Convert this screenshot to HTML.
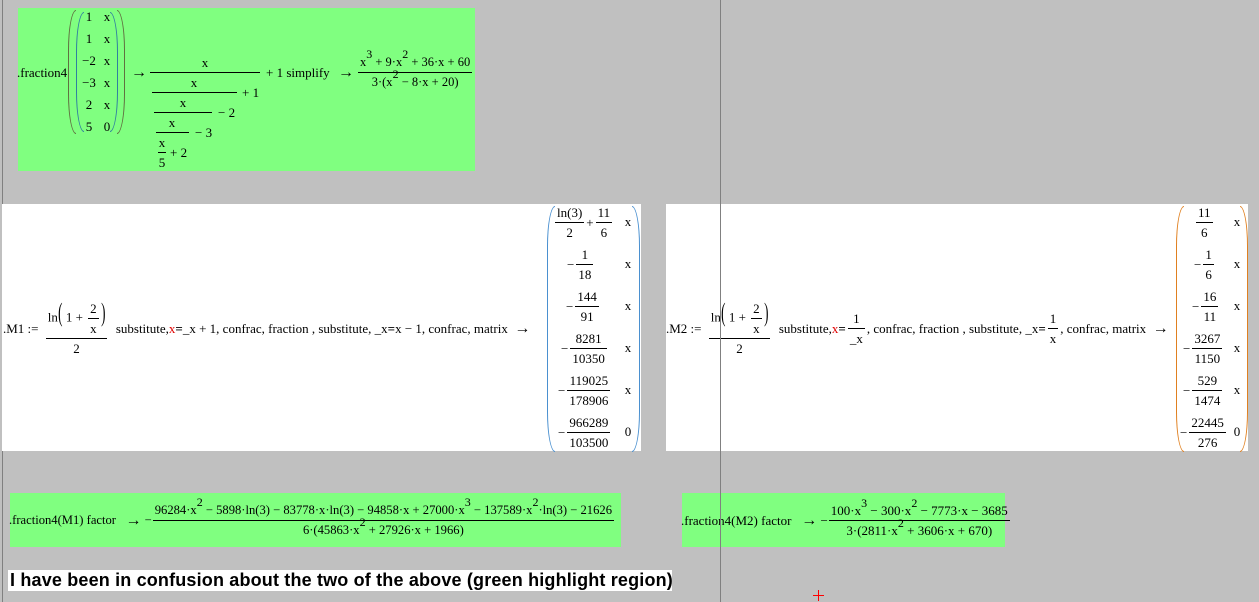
<!DOCTYPE html>
<html><head><meta charset="utf-8"><style>
body{margin:0;width:1259px;height:602px;background:#c0c0c0;position:relative;overflow:hidden;font-family:"Liberation Serif",serif;font-size:13px;color:#000}
.b{position:absolute}
.r{position:absolute;display:flex;align-items:center;height:0;white-space:nowrap;line-height:13px}
.fr{display:inline-flex;flex-direction:column;align-items:center;margin:0 2px}
.fr>span{padding:0 2px;line-height:13px}
.fr>i{display:block;align-self:stretch;border-top:1px solid #000;height:0;margin:3px 0}
sup{font-size:12px;line-height:0;position:relative;top:-2px;vertical-align:super}
.pl{position:absolute;border:1px solid #000;border-right:none;border-radius:8px 0 0 8px/40px 0 0 40px}
.pr{position:absolute;border:1px solid #000;border-left:none;border-radius:0 8px 8px 0/0 40px 40px 0}
.c{position:absolute;width:30px;text-align:center;transform:translate(-15px,-7px);line-height:14px}
.red{color:#e00000}
.ar{font-size:16px}
.bp{font-size:26px;line-height:13px;display:inline-block;transform:scaleX(.5);margin:0 -2px}
</style></head><body>
<div class="b" style="left:2px;top:0;width:1px;height:602px;background:#808080"></div>

<!-- box 1 -->
<div class="b" style="left:18px;top:8px;width:457px;height:163px;background:#80ff80"></div>
<div class="r" style="left:17px;top:72px">.fraction4</div>
<div class="pl" style="left:68px;top:10px;width:7px;height:122px;border-color:#607040"></div>
<div class="pl" style="left:76px;top:12px;width:7px;height:118px;border-color:#3080a0"></div>
<div class="pr" style="left:110px;top:12px;width:7px;height:118px;border-color:#3080a0"></div>
<div class="pr" style="left:117px;top:10px;width:7px;height:122px;border-color:#607040"></div>
<div class="c" style="left:89px;top:17px">1</div><div class="c" style="left:107px;top:17px">x</div>
<div class="c" style="left:89px;top:39px">1</div><div class="c" style="left:107px;top:39px">x</div>
<div class="c" style="left:89px;top:61px">−2</div><div class="c" style="left:107px;top:61px">x</div>
<div class="c" style="left:89px;top:83px">−3</div><div class="c" style="left:107px;top:83px">x</div>
<div class="c" style="left:89px;top:105px">2</div><div class="c" style="left:107px;top:105px">x</div>
<div class="c" style="left:89px;top:127px">5</div><div class="c" style="left:107px;top:127px">0</div>
<div class="r ar" style="left:131px;top:72px">→</div>
<div class="b" style="left:150px;top:72px;width:110px;height:1px;background:#000"></div>
<div class="c" style="left:205px;top:63px">x</div>
<div class="r" style="left:266px;top:72px">+ 1 simplify</div>
<div class="b" style="left:152px;top:92px;width:85px;height:1px;background:#000"></div>
<div class="c" style="left:194px;top:83px">x</div>
<div class="r" style="left:242px;top:92px">+ 1</div>
<div class="b" style="left:154px;top:112px;width:58px;height:1px;background:#000"></div>
<div class="c" style="left:183px;top:103px">x</div>
<div class="r" style="left:218px;top:112px">− 2</div>
<div class="b" style="left:156px;top:132px;width:33px;height:1px;background:#000"></div>
<div class="c" style="left:172px;top:123px">x</div>
<div class="r" style="left:195px;top:132px">− 3</div>
<div class="b" style="left:158px;top:152px;width:8px;height:1px;background:#000"></div>
<div class="c" style="left:162px;top:143px">x</div>
<div class="c" style="left:162px;top:163px">5</div>
<div class="r" style="left:170px;top:152px">+ 2</div>
<div class="r ar" style="left:338px;top:72px">→</div>
<div class="r" style="left:356px;top:72px;font-size:12.5px"><span class="fr"><span>x<sup>3</sup> + 9·x<sup>2</sup> + 36·x + 60</span><i></i><span>3·(x<sup>2</sup> − 8·x + 20)</span></span></div>

<!-- box M1 -->
<div class="b" style="left:2px;top:204px;width:639px;height:247px;background:#fff"></div>
<div class="r" style="left:3px;top:328px">.M1 :=&nbsp;<span class="fr" style="margin-left:4px"><span>ln<span class="bp">(</span> 1 + <span class="fr" style="vertical-align:middle"><span>2</span><i></i><span>x</span></span><span class="bp">)</span></span><i></i><span>2</span></span>&nbsp; substitute, <span class="red">x</span> <b>=</b> _x + 1, confrac, fraction , substitute, _x <b>=</b> x − 1, confrac, matrix &nbsp;<span class="ar">→</span></div>
<div class="pl" style="left:547px;top:206px;width:7px;height:244px;border-color:#4a90d0"></div>
<div class="pr" style="left:632px;top:206px;width:7px;height:244px;border-color:#4a90d0"></div>
<div class="r" style="left:553px;top:222px"><span class="fr"><span>ln(3)</span><i></i><span>2</span></span>+<span class="fr"><span>11</span><i></i><span>6</span></span></div>
<div class="r" style="left:567px;top:264px">−<span class="fr"><span>1</span><i></i><span>18</span></span></div>
<div class="r" style="left:566px;top:306px">−<span class="fr"><span>144</span><i></i><span>91</span></span></div>
<div class="r" style="left:561px;top:348px">−<span class="fr"><span>8281</span><i></i><span>10350</span></span></div>
<div class="r" style="left:558px;top:390px">−<span class="fr"><span>119025</span><i></i><span>178906</span></span></div>
<div class="r" style="left:558px;top:432px">−<span class="fr"><span>966289</span><i></i><span>103500</span></span></div>
<div class="c" style="left:628px;top:222px">x</div><div class="c" style="left:628px;top:264px">x</div><div class="c" style="left:628px;top:306px">x</div><div class="c" style="left:628px;top:348px">x</div><div class="c" style="left:628px;top:390px">x</div><div class="c" style="left:628px;top:432px">0</div>

<!-- box M2 -->
<div class="b" style="left:666px;top:204px;width:582px;height:247px;background:#fff"></div>
<div class="r" style="left:666px;top:328px">.M2 :=&nbsp;<span class="fr" style="margin-left:4px"><span>ln<span class="bp">(</span> 1 + <span class="fr" style="vertical-align:middle"><span>2</span><i></i><span>x</span></span><span class="bp">)</span></span><i></i><span>2</span></span>&nbsp; substitute, <span class="red">x</span> <b>=</b> <span class="fr"><span>1</span><i></i><span>_x</span></span>, confrac, fraction , substitute, _x <b>=</b> <span class="fr"><span>1</span><i></i><span>x</span></span>, confrac, matrix &nbsp;<span class="ar">→</span></div>
<div class="pl" style="left:1176px;top:206px;width:7px;height:244px;border-color:#e08020"></div>
<div class="pr" style="left:1240px;top:206px;width:7px;height:244px;border-color:#e08020"></div>
<div class="r" style="left:1194px;top:222px"><span class="fr"><span>11</span><i></i><span>6</span></span></div>
<div class="r" style="left:1194px;top:264px">−<span class="fr"><span>1</span><i></i><span>6</span></span></div>
<div class="r" style="left:1192px;top:306px">−<span class="fr"><span>16</span><i></i><span>11</span></span></div>
<div class="r" style="left:1183px;top:348px">−<span class="fr"><span>3267</span><i></i><span>1150</span></span></div>
<div class="r" style="left:1183px;top:390px">−<span class="fr"><span>529</span><i></i><span>1474</span></span></div>
<div class="r" style="left:1180px;top:432px">−<span class="fr"><span>22445</span><i></i><span>276</span></span></div>
<div class="c" style="left:1237px;top:222px">x</div><div class="c" style="left:1237px;top:264px">x</div><div class="c" style="left:1237px;top:306px">x</div><div class="c" style="left:1237px;top:348px">x</div><div class="c" style="left:1237px;top:390px">x</div><div class="c" style="left:1237px;top:432px">0</div>

<!-- bottom boxes -->
<div class="b" style="left:10px;top:493px;width:611px;height:54px;background:#80ff80"></div>
<div class="r" style="left:9px;top:520px;font-size:12.6px">.fraction4(M1) factor &nbsp;&nbsp;<span class="ar">→</span>&nbsp;−<span class="fr" style="margin-left:1px"><span>96284·x<sup>2</sup> − 5898·ln(3) − 83778·x·ln(3) − 94858·x + 27000·x<sup>3</sup> − 137589·x<sup>2</sup>·ln(3) − 21626</span><i></i><span>6·(45863·x<sup>2</sup> + 27926·x + 1966)</span></span></div>
<div class="b" style="left:682px;top:493px;width:323px;height:54px;background:#80ff80"></div>
<div class="r" style="left:681px;top:520px">.fraction4(M2) factor &nbsp;&nbsp;<span class="ar">→</span>&nbsp;−<span class="fr" style="margin-left:1px"><span>100·x<sup>3</sup> − 300·x<sup>2</sup> − 7773·x − 3685</span><i></i><span>3·(2811·x<sup>2</sup> + 3606·x + 670)</span></span></div>

<div class="b" style="left:8px;top:570px;width:664px;height:21px;background:#fff"></div>
<div class="b" style="left:10px;top:570px;font:bold 18px 'Liberation Sans',sans-serif;letter-spacing:0.17px;line-height:21px;white-space:nowrap">I have been in confusion about the two of the above (green highlight region)</div>

<div class="b" style="left:720px;top:0;width:1px;height:602px;background:#808080"></div>
<div class="b" style="left:813px;top:595px;width:11px;height:1px;background:#f00"></div>
<div class="b" style="left:818px;top:590px;width:1px;height:11px;background:#f00"></div>
</body></html>
